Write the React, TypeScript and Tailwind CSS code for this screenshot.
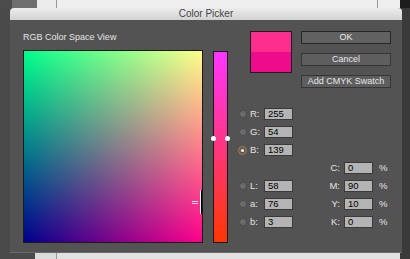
import React from "react";

const font = { fontFamily: '"Liberation Sans", Arial, sans-serif' };

function Radio({ checked }: { checked?: boolean }) {
  return checked ? (
    <span className="flex h-[9px] w-[9px] items-center justify-center rounded-full border border-[#b9773c] bg-[#5a5a5a]">
      <span className="h-[3px] w-[3px] rounded-full bg-white" />
    </span>
  ) : (
    <span className="h-[8px] w-[8px] rounded-full border border-[#4a4a4a] bg-[#6c6c6c]" />
  );
}

function Field({ value }: { value: string }) {
  return (
    <div className="flex h-[12px] w-[29px] items-center border border-[#3a3a3a] bg-[#b4b4b4] pl-[3px] text-[9.5px] leading-none text-black">
      {value}
    </div>
  );
}

function Btn({ label, primary }: { label: string; primary?: boolean }) {
  return (
    <div
      className={`flex h-[13px] w-[90px] items-center justify-center border text-[9px] leading-none text-[#e8e8e8] ${
        primary ? "border-[#262626] bg-[#616161]" : "border-[#363636] bg-[#5e5e5e]"
      }`}
    >
      {label}
    </div>
  );
}

const rgbLab: ([string, string, boolean?] | null)[] = [
  ["R:", "255"],
  ["G:", "54"],
  ["B:", "139", true],
  null,
  ["L:", "58"],
  ["a:", "76"],
  ["b:", "3"],
];

const cmyk: ([string, string] | null)[] = [null, null, null, ["C:", "0"], ["M:", "90"], ["Y:", "10"], ["K:", "0"]];

export default function App() {
  return (
    <div className="flex h-[259px] w-[410px] flex-col overflow-hidden bg-[#454545]" style={font}>
      {/* desktop strip behind the dialog */}
      <div className="flex h-[8px] shrink-0">
        <div className="w-[12px] bg-[#4b4b4b]" />
        <div className="w-[25px] bg-[#6e6e6e]" />
        <div className="w-[20px] border-r border-[#9a9a9a] bg-[#ebebeb]" />
        <div className="w-[321px] border-r border-[#9a9a9a] bg-[#efefef]" />
        <div className="w-[22px] bg-[#efefef]" />
        <div className="flex-1 bg-[#1d1d1d]" />
      </div>

      <div className="flex flex-1">
        <div className="w-[10px] bg-[#4a4a4a]" />
        {/* dialog */}
        <div className="flex h-[245px] w-[392px] flex-col overflow-hidden rounded-t-[4px] border-b border-[#6a6a6a] bg-[#535353]">
          <div className="flex h-[12px] shrink-0 items-center justify-center bg-[linear-gradient(#ececec,#d2d2d2)] text-[10px] leading-none text-[#444]">
            Color Picker
          </div>

          <div className="flex pl-[13px]">
            {/* colour space */}
            <div className="flex flex-col">
              <div className="h-[30px] pt-[13px] text-[9px] leading-none text-[#e4e4e4]">RGB Color Space View</div>
              <div className="relative h-[193px] w-[180px] border border-[#1a1a1a] bg-[linear-gradient(to_bottom,#00ff00,#000000),linear-gradient(to_right,#00008b,#ff008b)] bg-blend-screen">
                <div className="absolute right-[4px] top-[150px] h-[1px] w-[6px] bg-white/80" />
                <div className="absolute right-[4px] top-[152px] h-[1px] w-[6px] bg-white/80" />
                <div className="absolute right-0 top-[139px] h-[24px] w-[2px] border-l border-white bg-black" />
              </div>
            </div>

            {/* blue slider */}
            <div className="relative ml-[10px] mt-[31px] h-[192px] w-[15px] border border-[#1a1a1a] bg-[linear-gradient(to_bottom,#ff36ff,#ff3600)]">
              <div className="absolute left-[-3px] top-[84px] h-[5px] w-[5px] rounded-full bg-white" />
              <div className="absolute right-[-3px] top-[84px] h-[5px] w-[5px] rounded-full bg-white" />
            </div>

            {/* controls */}
            <div className="ml-[8px] flex w-[157px] flex-col">
              <div className="flex pt-[11px]">
                <div className="ml-[14px] flex h-[42px] w-[42px] flex-col border border-[#1e1e1e]">
                  <div className="flex-1 bg-[#fe2f8c]" />
                  <div className="flex-1 bg-[#ee0b8c]" />
                </div>
                <div className="ml-[9px] flex flex-col">
                  <Btn label="OK" primary />
                  <div className="h-[9px]" />
                  <Btn label="Cancel" />
                  <div className="h-[9px]" />
                  <Btn label="Add CMYK Swatch" />
                </div>
              </div>

              <div className="mt-[17px] grid grid-cols-[60px_1fr]">
                <div className="flex flex-col">
                  {rgbLab.map((r, i) => (
                    <div key={i} className="flex h-[18px] items-center">
                      {r && (
                        <>
                          <div className="ml-[2px] flex w-[9px] justify-center">
                            <Radio checked={r[2]} />
                          </div>
                          <span className="ml-[3px] w-[14px] text-[9.5px] leading-none text-[#e4e4e4]">{r[0]}</span>
                          <Field value={r[1]} />
                        </>
                      )}
                    </div>
                  ))}
                </div>
                <div className="flex flex-col">
                  {cmyk.map((r, i) => (
                    <div key={i} className="flex h-[18px] items-center">
                      {r && (
                        <>
                          <span className="w-[48px] pr-[4px] text-right text-[9.5px] leading-none text-[#e4e4e4]">{r[0]}</span>
                          <Field value={r[1]} />
                          <span className="ml-[6px] text-[9.5px] leading-none text-[#e4e4e4]">%</span>
                        </>
                      )}
                    </div>
                  ))}
                </div>
              </div>
            </div>
          </div>
        </div>
        <div className="flex-1 bg-[#3a3a3a]" />
      </div>

      {/* window below */}
      <div className="flex h-[6px] shrink-0">
        <div className="w-[35px] bg-[#4a4a4a]" />
        <div className="w-[22px] border-r border-[#999] bg-[#dcdcdc]" />
        <div className="w-[343px] bg-[#e2e2e2]" />
        <div className="flex-1 bg-[#3a3a3a]" />
      </div>
    </div>
  );
}
